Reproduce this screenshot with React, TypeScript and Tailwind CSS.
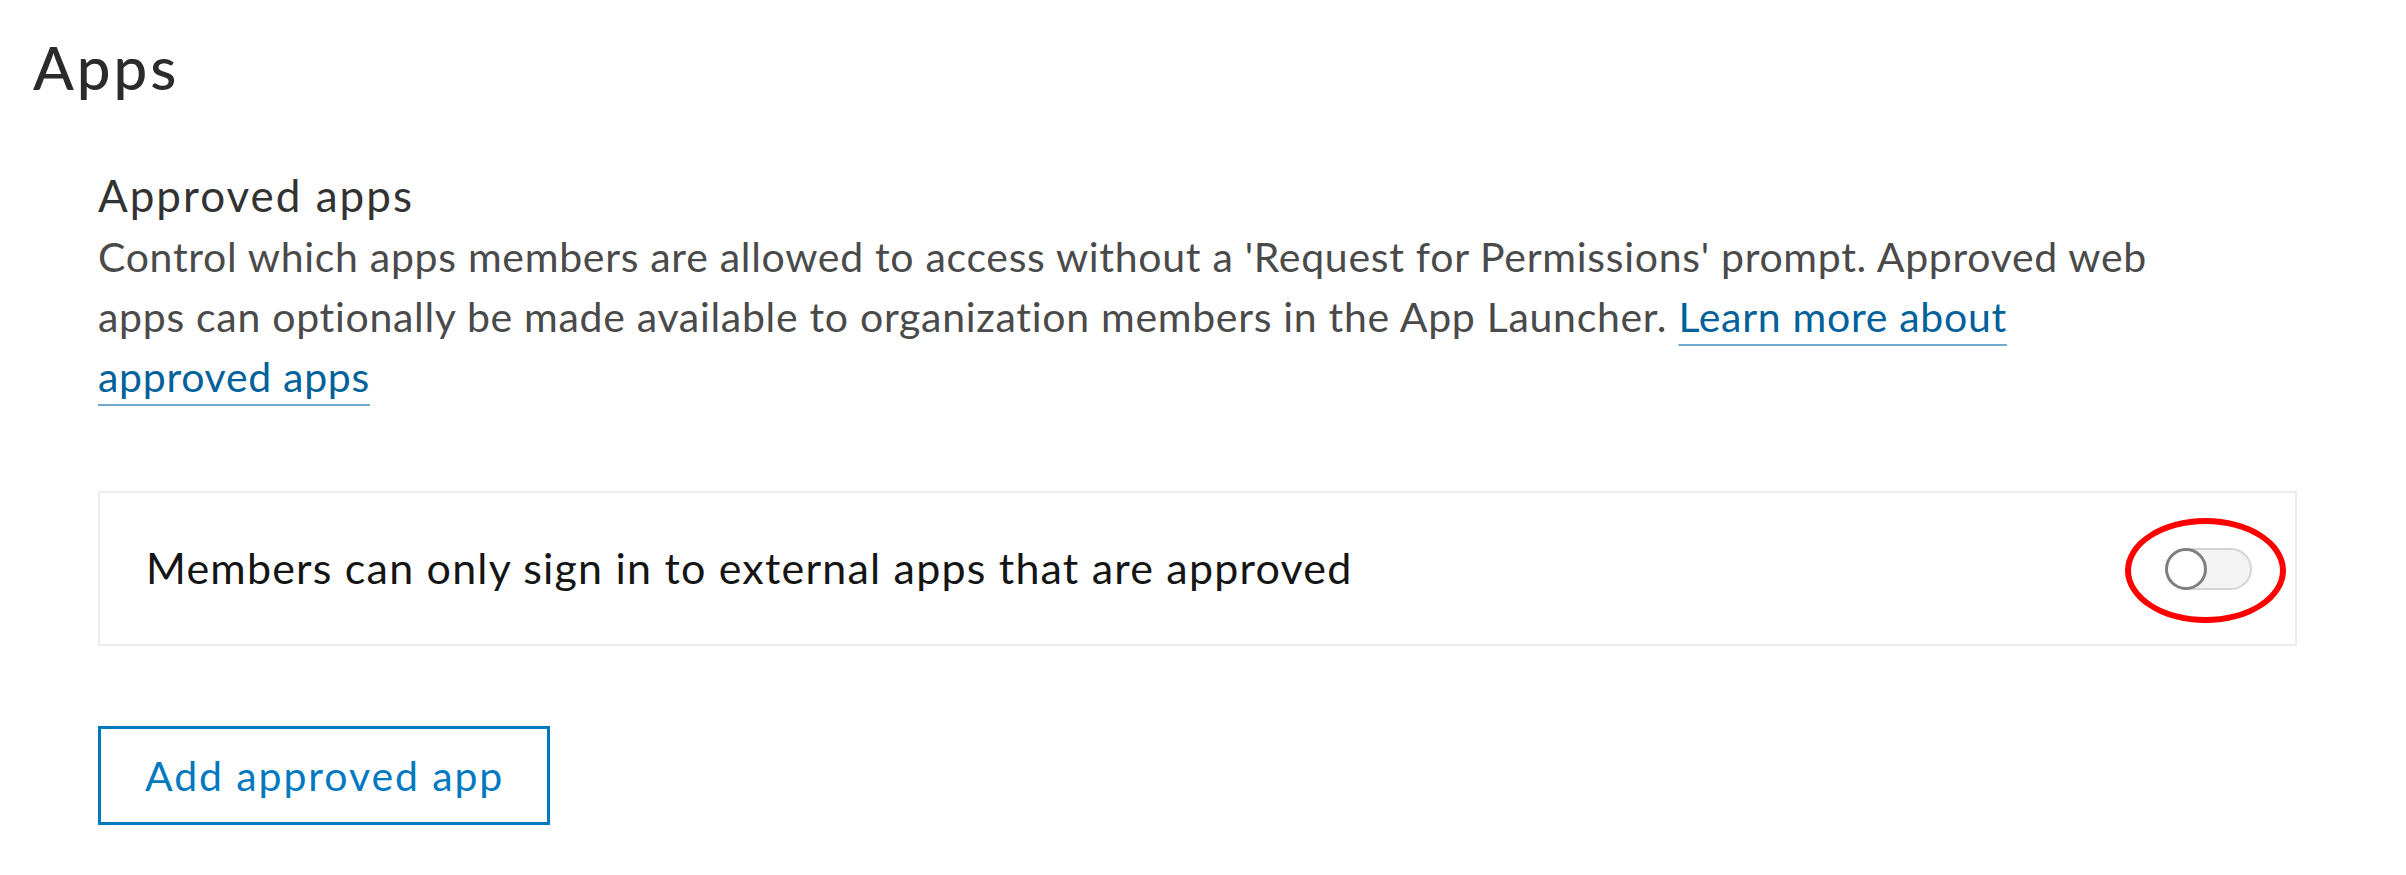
import { useState } from "react";

export default function App() {
  const [restricted, setRestricted] = useState(false);

  return (
    <div className="min-h-screen w-full bg-white font-['Lato',sans-serif]">
      <h1 className="pl-[33px] pt-[37px] text-[60px] leading-[60px] font-medium tracking-[3px] text-[#2b2b2b]">
        Apps
      </h1>

      <section className="pl-[98px] pr-[109px] pt-[68px]">
        <h2 className="text-[44px] leading-[60px] tracking-[2px] text-[#323232]">Approved apps</h2>
        <p className="mt-[2px] max-w-[2086px] text-[41px] leading-[60px] tracking-[0.7px] text-[#4a4a4a]">
          Control which apps members are allowed to access without a 'Request for Permissions' prompt. Approved web
          apps can optionally be made available to organization members in the App Launcher.{" "}
          <a
            href="#"
            className="text-[#00619b] underline decoration-[#6fa9cf] decoration-2 underline-offset-[12px]"
          >
            Learn more about approved apps
          </a>
        </p>

        {/* Ajuste: solo apps aprobadas */}
        <div className="mt-[84px] flex h-[155px] items-center justify-between border-2 border-[#ececec] pl-[46px] pr-[43px]">
          <span className="text-[43px] tracking-[1.2px] text-[#151515]">
            Members can only sign in to external apps that are approved
          </span>
          <div className="relative">
            <button
              onClick={() => setRestricted(!restricted)}
              className={`flex h-[42px] w-[87px] items-center rounded-full border-2 ${
                restricted ? "justify-end border-[#0079c1] bg-[#0079c1]" : "justify-start border-[#d4d4d4] bg-[#f3f3f3]"
              }`}
            >
              <span className="-m-[2px] h-[42px] w-[42px] rounded-full border-[3px] border-[#7f7f7f] bg-white" />
            </button>
            <span className="pointer-events-none absolute -left-[40px] -top-[30px] h-[105px] w-[161px] rounded-[50%] border-[6px] border-[#ff0000]" />
          </div>
        </div>

        <button className="mt-[80px] flex h-[99px] w-[452px] items-center border-[3px] border-[#0079c1] pl-[44px] text-[41px] tracking-[1.9px] text-[#0079c1]">
          Add approved app
        </button>
      </section>
    </div>
  );
}
